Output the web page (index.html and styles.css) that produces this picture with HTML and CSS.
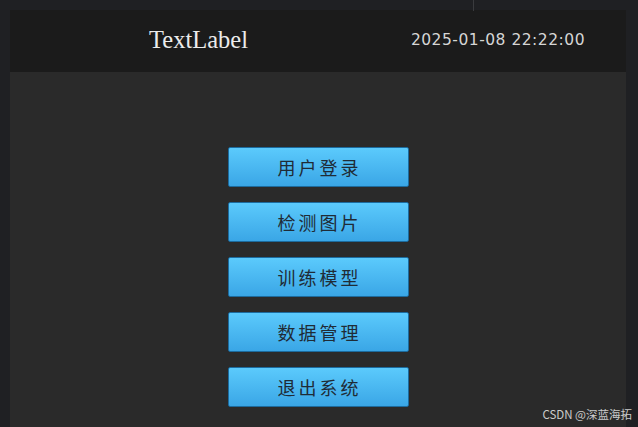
FILE: index.html
```html
<!DOCTYPE html>
<html lang="zh-CN">
<head>
    <meta charset="UTF-8">
    <meta name="viewport" content="width=device-width, initial-scale=1.0">
    <title>主界面</title>
    <link rel="stylesheet" href="styles.css">
</head>
<body>
    <div class="topline"></div>
    <div class="window">
        <div class="header">
            <span class="title">TextLabel</span>
            <span class="clock">2025-01-08 22:22:00</span>
        </div>
        <div class="menu">
            <button class="menu-btn">用户登录</button>
            <button class="menu-btn">检测图片</button>
            <button class="menu-btn">训练模型</button>
            <button class="menu-btn">数据管理</button>
            <button class="menu-btn">退出系统</button>
        </div>
    </div>
    <div class="watermark">CSDN @深蓝海拓</div>
</body>
</html>
```

FILE: styles.css
```css
html, body {
    height: 100%;
}

body {
    margin: 0;
    padding: 10px 0 0 10px;
    box-sizing: border-box;
    background-color: #1f2023;
    overflow: hidden;
    position: relative;
}

.topline {
    position: absolute;
    left: 473px;
    top: 0;
    width: 1px;
    height: 11px;
    background-color: #3a3b3e;
}

.window {
    width: 616px;
    height: 100%;
    background-color: #2a2a2a;
}

.header {
    height: 62px;
    background-color: #1b1b1b;
    display: flex;
    align-items: center;
    justify-content: space-between;
    padding: 0 41px 0 139px;
}

.title {
    font-family: "Liberation Serif", "DejaVu Serif", serif;
    font-size: 24.5px;
    color: #ececec;
    margin-top: -2px;
}

.clock {
    font-family: "DejaVu Sans", "Liberation Sans", sans-serif;
    font-size: 15.5px;
    color: #d6d6d6;
    letter-spacing: 0.5px;
    margin-top: -3px;
}

.menu {
    display: flex;
    flex-direction: column;
    align-items: center;
    gap: 15px;
    padding-top: 75px;
}

.menu-btn {
    width: 181px;
    height: 40px;
    border: 1px solid #1c6b9e;
    border-radius: 2px;
    background: linear-gradient(to bottom, #5bcafc, #3aa6e6);
    color: #1f2b36;
    font-family: "Noto Sans CJK SC", sans-serif;
    font-size: 18px;
    letter-spacing: 3px;
    padding: 0 0 0 3px;
    cursor: pointer;
}

.watermark {
    position: absolute;
    right: 6px;
    bottom: 5px;
    font-family: "Noto Sans CJK SC", sans-serif;
    font-size: 11.5px;
    color: #cccccc;
}
```
